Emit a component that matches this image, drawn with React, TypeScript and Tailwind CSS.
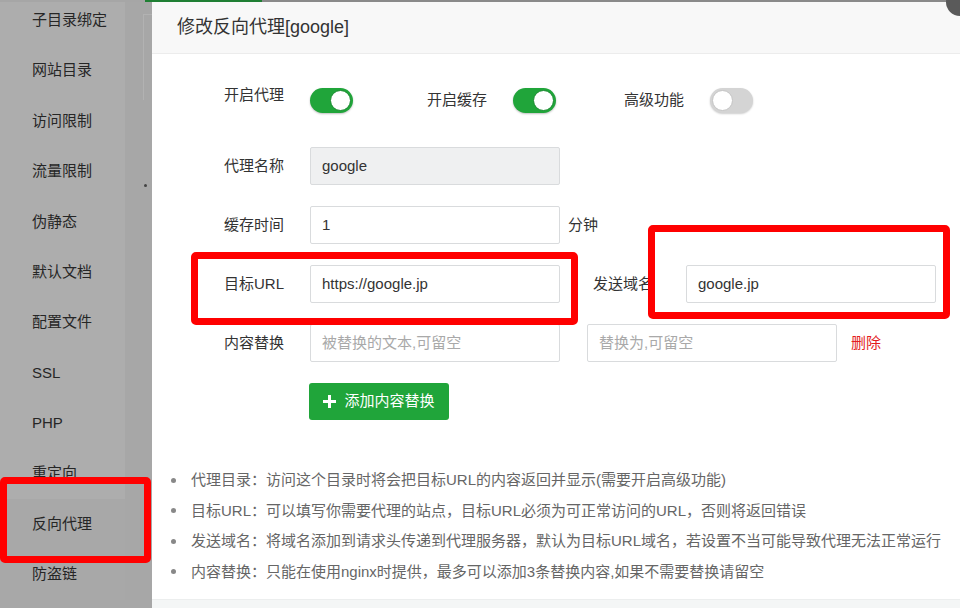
import React from "react";

const cjk = { fontFamily: '"Liberation Sans", "Noto Sans CJK SC", sans-serif' };

function Toggle({ on }: { on: boolean }) {
  return (
    <div
      className={
        "relative w-[43px] h-[25px] rounded-full shrink-0 " +
        (on ? "bg-[#20a53a] shadow-[0_1px_2px_rgba(0,0,0,0.25)]" : "bg-[#d4d4d4] shadow-[0_1px_2px_rgba(0,0,0,0.2)]")
      }
    >
      <div
        className={
          "absolute top-[2px] w-[21px] h-[21px] rounded-full bg-white " +
          (on ? "right-[2px] border border-[#1a8a30]" : "left-[2px] border border-[#c4c4c4]")
        }
      />
    </div>
  );
}

function Input({ value, placeholder, disabled }: { value?: string; placeholder?: string; disabled?: boolean }) {
  return (
    <div
      className={
        "w-[250px] h-[38px] shrink-0 border border-[#d9dbdd] rounded-[2px] flex items-center px-[11px] text-[15px] " +
        (disabled ? "bg-[#eff0f1]" : "bg-white")
      }
    >
      {value ? (
        <span className="text-[#333]">{value}</span>
      ) : (
        <span className="text-[#a9a9a9]">{placeholder}</span>
      )}
    </div>
  );
}

function Label({ children, extra }: { children: React.ReactNode; extra?: string }) {
  return <div className={"w-[132px] shrink-0 text-right text-[15px] text-[#333] " + (extra || "")}>{children}</div>;
}

const sideItems = [
  "子目录绑定",
  "网站目录",
  "访问限制",
  "流量限制",
  "伪静态",
  "默认文档",
  "配置文件",
  "SSL",
  "PHP",
  "重定向",
  "反向代理",
  "防盗链",
];

export default function App() {
  return (
    <div className="relative w-[960px] h-[608px] overflow-hidden bg-[#a7a7a7]" style={cjk}>
      {/* background page */}
      <div className="flex h-full">
        <div className="w-[125px] h-full flex flex-col">
          {sideItems.map((t, i) => (
            <div
              key={t}
              className={
                "h-[50.4px] shrink-0 flex items-center pl-[32px] text-[15px] text-[#262626] " +
                (i === 0 ? "-mt-[5px] " : "") +
                (i < 10 ? "bg-[#adadad]" : "bg-[#a8a8a8]")
              }
            >
              {t}
            </div>
          ))}
        </div>
        <div className="flex-1 h-full relative">
          <div className="absolute left-[18px] top-[14px] w-[20px] h-[86px] border-l border-t border-[#b2b2b2]" />
          <div className="absolute left-[19px] top-[184px] w-[3px] h-[3px] rounded-full bg-[#444]" />
        </div>
      </div>

      {/* top strip behind */}
      <div className="absolute left-0 top-0 w-[960px] h-[2px] flex">
        <div className="w-[145px] bg-[#a6a6a6]" />
        <div className="w-[117px] bg-[#1f7f33]" />
        <div className="flex-1 bg-[#8a8a8a]" />
      </div>

      {/* dialog */}
      <div className="absolute left-[152px] top-[2px] w-[820px] h-[606px] bg-white flex flex-col">
        <div className="h-[52px] shrink-0 bg-[#f8f8f8] border-b border-[#ececec] flex items-center pl-[25px] text-[18px] text-[#333]">
          修改反向代理[google]
        </div>

        <div className="flex flex-col pt-[34px]">
          {/* row 1 */}
          <div className="flex items-center h-[25px]">
            <Label extra="mb-[10px]">开启代理</Label>
            <div className="ml-[26px]">
              <Toggle on />
            </div>
            <div className="ml-[74px] w-[60px] text-[15px] text-[#333]">开启缓存</div>
            <div className="ml-[26px]">
              <Toggle on />
            </div>
            <div className="ml-[68px] w-[60px] text-[15px] text-[#333]">高级功能</div>
            <div className="ml-[26px]">
              <Toggle on={false} />
            </div>
          </div>

          {/* row 2 */}
          <div className="flex items-center mt-[34px]">
            <Label>代理名称</Label>
            <div className="ml-[26px]">
              <Input value="google" disabled />
            </div>
          </div>

          {/* row 3 */}
          <div className="flex items-center mt-[21px]">
            <Label>缓存时间</Label>
            <div className="ml-[26px]">
              <Input value="1" />
            </div>
            <div className="ml-[8px] text-[15px] text-[#333]">分钟</div>
          </div>

          {/* row 4 */}
          <div className="flex items-center mt-[21px]">
            <Label>目标URL</Label>
            <div className="ml-[26px]">
              <Input value="https://google.jp" />
            </div>
            <div className="ml-[33px] w-[60px] text-[15px] text-[#333] whitespace-nowrap">发送域名</div>
            <div className="ml-[33px]">
              <Input value="google.jp" />
            </div>
          </div>

          {/* row 5 */}
          <div className="flex items-center mt-[21px]">
            <Label>内容替换</Label>
            <div className="ml-[26px]">
              <Input placeholder="被替换的文本,可留空" />
            </div>
            <div className="ml-[27px]">
              <Input placeholder="替换为,可留空" />
            </div>
            <div className="ml-[14px] text-[15px] text-[#e41e1e]">删除</div>
          </div>

          {/* button */}
          <div className="flex mt-[21px] pl-[157px]">
            <div className="h-[37px] w-[140px] rounded-[3px] bg-[#20a53a] flex items-center justify-center gap-[8px] text-white text-[15px]">
              <svg width="13" height="13" viewBox="0 0 13 13">
                <path d="M5 0h3v5h5v3H8v5H5V8H0V5h5z" fill="#fff" />
              </svg>
              <span>添加内容替换</span>
            </div>
          </div>

          {/* notes */}
          <div className="mt-[45px] flex flex-col text-[15px] text-[#666] leading-[30.5px]">
            {[
              "代理目录：访问这个目录时将会把目标URL的内容返回并显示(需要开启高级功能)",
              "目标URL：可以填写你需要代理的站点，目标URL必须为可正常访问的URL，否则将返回错误",
              "发送域名：将域名添加到请求头传递到代理服务器，默认为目标URL域名，若设置不当可能导致代理无法正常运行",
              "内容替换：只能在使用nginx时提供，最多可以添加3条替换内容,如果不需要替换请留空",
            ].map((t) => (
              <div key={t} className="flex items-center whitespace-nowrap">
                <div className="ml-[19px] w-[5px] h-[5px] rounded-full bg-[#888] shrink-0" />
                <div className="ml-[15px]">{t}</div>
              </div>
            ))}
          </div>
        </div>

        <div className="absolute left-0 top-[597px] w-full h-[20px] bg-[#f4f6f6] border-t border-[#eceeee]" />
      </div>

      {/* close button partially visible */}
      <div className="absolute left-[946px] top-[-12px] w-[28px] h-[28px] rounded-full bg-[#5a5a5a]" />

      {/* red highlight boxes */}
      <div className="absolute left-[191px] top-[252px] w-[387px] h-[73px] border-[7px] border-[#ff0000] rounded-[5px]" />
      <div className="absolute left-[648px] top-[225px] w-[302px] h-[94px] border-[7px] border-[#ff0000] rounded-[5px]" />
      <div className="absolute left-0 top-[477px] w-[151px] h-[86px] border-[7px] border-[#ff0000] rounded-[5px]" />
    </div>
  );
}
